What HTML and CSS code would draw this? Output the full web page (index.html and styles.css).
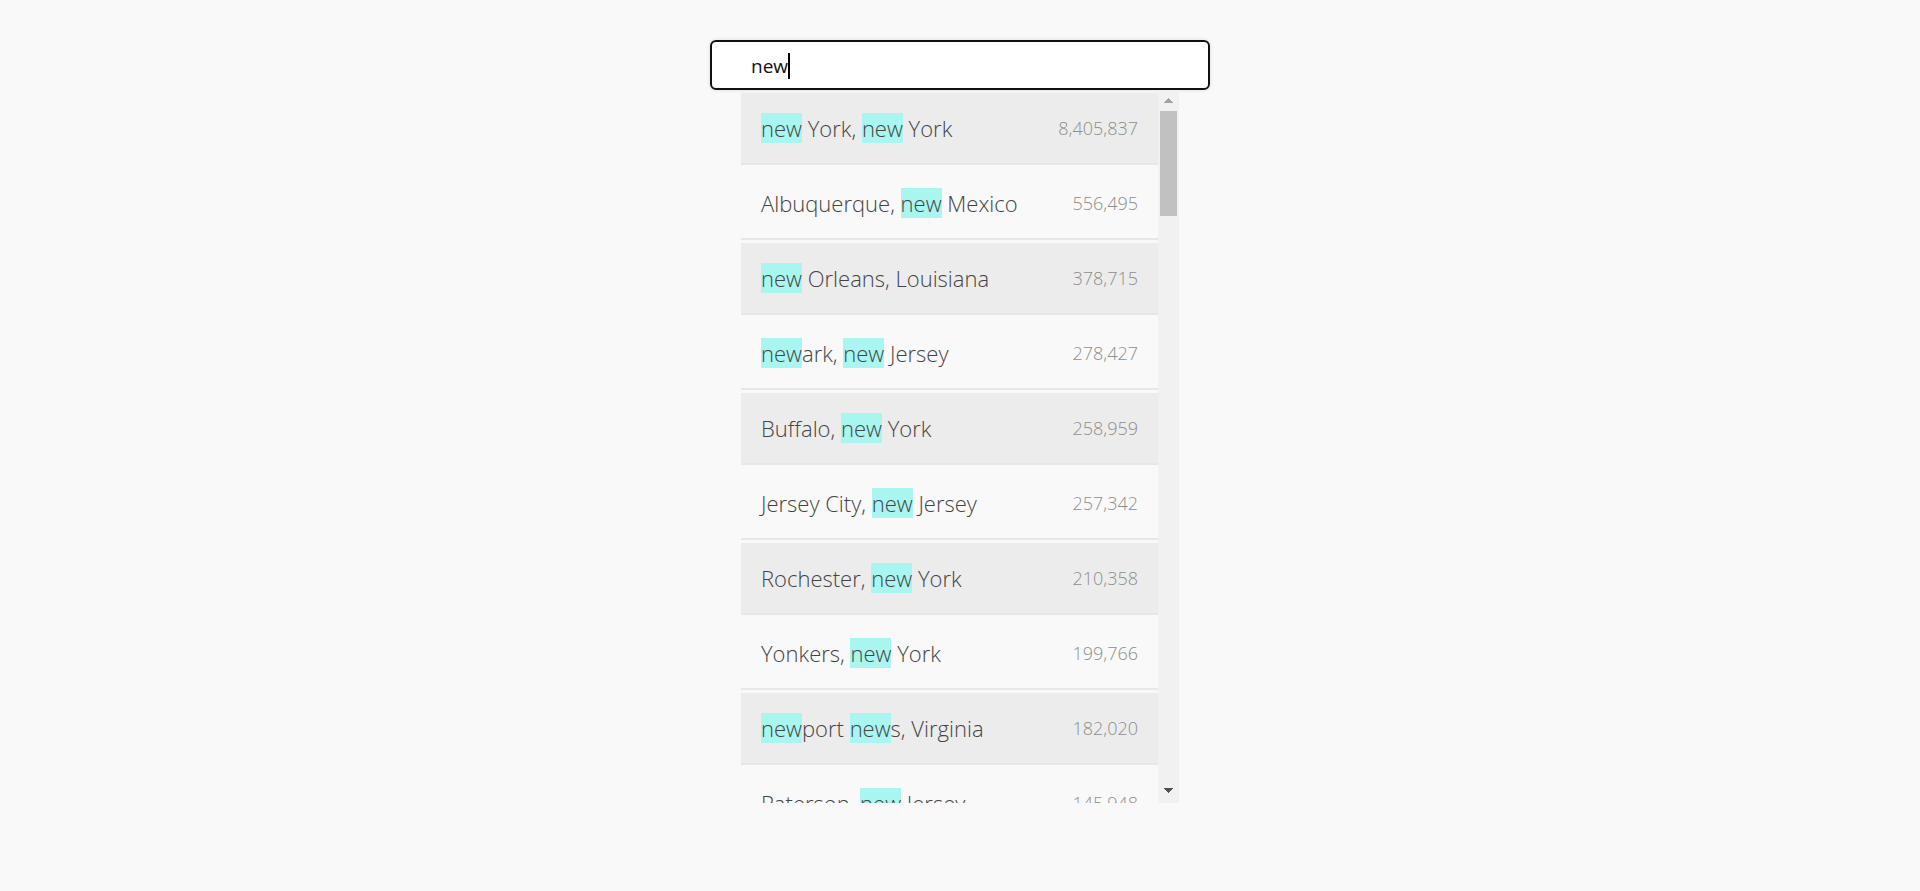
FILE: index.html
```html
<!DOCTYPE html>
<html lang="en">
<head>
<meta charset="utf-8">
<title>Type Ahead</title>
<link rel="stylesheet" href="styles.css">
</head>
<body>
<form class="search-form">
  <div class="search"><span class="search-text">new</span><span class="caret"></span></div>
  <div class="results">
    <ul class="suggestions">
      <li><span class="name"><span class="hl">new</span> York, <span class="hl">new</span> York</span><span class="population">8,405,837</span></li>
      <li><span class="name">Albuquerque, <span class="hl">new</span> Mexico</span><span class="population">556,495</span></li>
      <li><span class="name"><span class="hl">new</span> Orleans, Louisiana</span><span class="population">378,715</span></li>
      <li><span class="name"><span class="hl">new</span>ark, <span class="hl">new</span> Jersey</span><span class="population">278,427</span></li>
      <li><span class="name">Buffalo, <span class="hl">new</span> York</span><span class="population">258,959</span></li>
      <li><span class="name">Jersey City, <span class="hl">new</span> Jersey</span><span class="population">257,342</span></li>
      <li><span class="name">Rochester, <span class="hl">new</span> York</span><span class="population">210,358</span></li>
      <li><span class="name">Yonkers, <span class="hl">new</span> York</span><span class="population">199,766</span></li>
      <li><span class="name"><span class="hl">new</span>port <span class="hl">new</span>s, Virginia</span><span class="population">182,020</span></li>
      <li><span class="name">Paterson, <span class="hl">new</span> Jersey</span><span class="population">145,948</span></li>
    </ul>
    <div class="scrollbar" aria-hidden="true">
      <div class="scroll-btn up"></div>
      <div class="scroll-thumb"></div>
      <div class="scroll-space"></div>
      <div class="scroll-btn down"></div>
    </div>
  </div>
</form>
</body>
</html>
```

FILE: styles.css
```css
html, body {
  margin: 0;
  padding: 0;
}

body {
  background: #f9f9f9;
  font-family: "Open Sans", "Segoe UI", "Liberation Sans", sans-serif;
}

.search-form {
  width: 500px;
  margin: 40px auto 0;
}

.search {
  box-sizing: border-box;
  height: 50px;
  background: #ffffff;
  border: 2px solid #111111;
  border-radius: 6px;
  box-shadow: 0 0 4px rgba(0, 0, 0, 0.12);
  padding: 2px 0 0 39px;
  display: flex;
  align-items: center;
  font-size: 19px;
  color: #111111;
}

.caret {
  width: 2px;
  height: 26px;
  background: #000000;
}

.results {
  width: 438px;
  height: 713px;
  margin: 0 auto;
  display: flex;
}

.suggestions {
  flex: 1;
  margin: 0;
  padding: 3px 0 0;
  list-style: none;
  overflow: hidden;
}

.suggestions li {
  height: 70px;
  border-bottom: 2px solid #e7e7e7;
  margin-bottom: 3px;
  padding: 0 20px;
  display: flex;
  justify-content: space-between;
  align-items: center;
  background: #f9f9f9;
}

.suggestions li:nth-child(odd) {
  background: #ececec;
}

.name {
  font-size: 22px;
  font-weight: 300;
  color: #444444;
}

.hl {
  background: #a8f6ef;
}

.population {
  font-size: 18px;
  font-weight: 300;
  color: #8e8e8e;
}

.scrollbar {
  width: 21px;
  flex: none;
  background: #f1f1f1;
  display: flex;
  flex-direction: column;
}

.scroll-btn {
  height: 20px;
  background-repeat: no-repeat;
  background-position: center;
  background-size: 9px 5px;
}

.scroll-btn.up {
  background-image: conic-gradient(from 138deg at 50% 0%, #a3a3a3 0deg 84deg, transparent 84deg);
}

.scroll-btn.down {
  height: 25px;
  background-image: conic-gradient(from -42deg at 50% 100%, #505050 0deg 84deg, transparent 84deg);
}

.scroll-thumb {
  height: 105px;
  margin: 1px 2px 0;
  background: #c1c1c1;
}

.scroll-space {
  flex: 1;
}
```
